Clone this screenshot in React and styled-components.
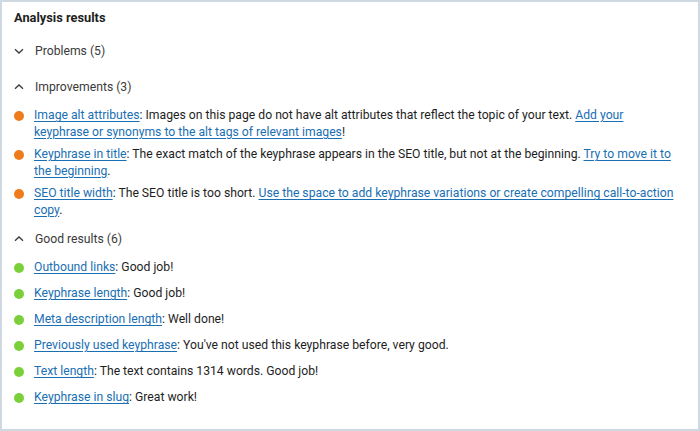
import React from "react";
import styled, { createGlobalStyle } from "styled-components";

const Global = createGlobalStyle`
  html, body { margin: 0; padding: 0; background: #fff; }
  body {
    font-family: Roboto, "Noto Sans", "Liberation Sans", sans-serif;
    -webkit-font-smoothing: antialiased;
  }
`;

const Panel = styled.section`
  box-sizing: border-box;
  width: 700px;
  height: 431px;
  border: 2px solid #cfd9e2;
  padding: 8px 24px 0 12px;
  background: #fff;
  color: #1e1e1e;
  font-size: 12.2px;
`;

const Title = styled.h2`
  margin: 0;
  font-size: 12.8px;
  line-height: 16px;
  font-weight: 700;
  color: #1e1e1e;
`;

const SectionHeader = styled.button`
  display: flex;
  align-items: center;
  gap: 11px;
  width: 100%;
  margin: ${(p) => p.$mt || 0}px 0 0;
  padding: 10px 0;
  border: 0;
  background: none;
  font: inherit;
  font-size: 12.2px;
  line-height: 16px;
  color: #3a3a3a;
  text-align: left;
  cursor: pointer;
`;

const Chevron = styled.svg`
  width: 10px;
  height: 10px;
  flex: none;
`;

const List = styled.ul`
  list-style: none;
  margin: 2px 0 0;
  padding: 0;
  display: flex;
  flex-direction: column;
  gap: ${(p) => p.$gap}px;
`;

const Item = styled.li`
  display: flex;
  align-items: flex-start;
  gap: 10px;
  line-height: 16.5px;
`;

const Dot = styled.span`
  flex: none;
  width: 10px;
  height: 10px;
  margin-top: 3.5px;
  border-radius: 50%;
  background: ${(p) => p.$color};
`;

const Text = styled.p`
  margin: 0;
  flex: 1;
`;

const Link = styled.a`
  color: #1a6fb3;
  text-decoration: underline;
  text-underline-offset: 2px;
  text-decoration-thickness: 1px;
`;

const ORANGE = "#ee7c1b";
const GREEN = "#7ad03a";

function Caret({ up }) {
  return (
    <Chevron viewBox="0 0 10 10" fill="none" stroke="#3a3a3a" strokeWidth="1.3">
      {up ? <path d="M1 6.8 L5 3 L9 6.8" /> : <path d="M1 3.2 L5 7 L9 3.2" />}
    </Chevron>
  );
}

const improvements = [
  {
    label: "Image alt attributes",
    text: ": Images on this page do not have alt attributes that reflect the topic of your text. ",
    action: "Add your keyphrase or synonyms to the alt tags of relevant images",
    end: "!",
  },
  {
    label: "Keyphrase in title",
    text: ": The exact match of the keyphrase appears in the SEO title, but not at the beginning. ",
    action: "Try to move it to the beginning",
    end: ".",
  },
  {
    label: "SEO title width",
    text: ": The SEO title is too short. ",
    action: "Use the space to add keyphrase variations or create compelling call-to-action copy",
    end: ".",
  },
];

const good = [
  { label: "Outbound links", text: ": Good job!" },
  { label: "Keyphrase length", text: ": Good job!" },
  { label: "Meta description length", text: ": Well done!" },
  { label: "Previously used keyphrase", text: ": You've not used this keyphrase before, very good." },
  { label: "Text length", text: ": The text contains 1314 words. Good job!" },
  { label: "Keyphrase in slug", text: ": Great work!" },
];

export default function App() {
  return (
    <>
      <Global />
      <Panel>
        <Title>Analysis results</Title>

        <SectionHeader $mt={7}>
          <Caret />
          Problems (5)
        </SectionHeader>

        <SectionHeader>
          <Caret up />
          Improvements (3)
        </SectionHeader>
        <List $gap={6}>
          {improvements.map((r) => (
            <Item key={r.label}>
              <Dot $color={ORANGE} />
              <Text>
                <Link href="#">{r.label}</Link>
                {r.text}
                <Link href="#">{r.action}</Link>
                {r.end}
              </Text>
            </Item>
          ))}
        </List>

        <SectionHeader $mt={3}>
          <Caret up />
          Good results (6)
        </SectionHeader>
        <List $gap={9.5}>
          {good.map((r) => (
            <Item key={r.label}>
              <Dot $color={GREEN} />
              <Text>
                <Link href="#">{r.label}</Link>
                {r.text}
              </Text>
            </Item>
          ))}
        </List>
      </Panel>
    </>
  );
}
